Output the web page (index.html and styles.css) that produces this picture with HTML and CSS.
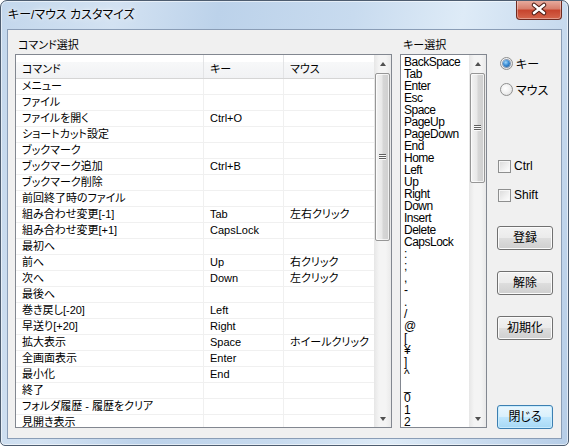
FILE: index.html
```html
<!DOCTYPE html>
<html lang="ja">
<head>
<meta charset="UTF-8">
<title>キー/マウス カスタマイズ</title>
<link rel="stylesheet" href="styles.css">
</head>
<body>

<div class="window">
  <div class="titlebar">
    <span class="title">キー/マウス カスタマイズ</span>
    <div class="close">
      <svg width="46" height="20" viewBox="0 0 46 20">
        <path d="M18 6 L28 14 M28 6 L18 14" stroke="#4a1a12" stroke-width="4.6" stroke-linecap="round"/>
        <path d="M18 6 L28 14 M28 6 L18 14" stroke="#fff" stroke-width="2.6" stroke-linecap="round"/>
      </svg>
    </div>
  </div>

  <div class="client">

    <div class="group cmd">
      <div class="label">コマンド選択</div>
      <div class="listview">
        <div class="lv-body">
          <div class="lv-head">
            <div>コマンド</div><div>キー</div><div>マウス</div>
          </div>
          <div class="lv-row"><div>メニュー</div><div></div><div></div></div>
          <div class="lv-row"><div>ファイル</div><div></div><div></div></div>
          <div class="lv-row"><div>ファイルを開く</div><div>Ctrl+O</div><div></div></div>
          <div class="lv-row"><div>ショートカット設定</div><div></div><div></div></div>
          <div class="lv-row"><div>ブックマーク</div><div></div><div></div></div>
          <div class="lv-row"><div>ブックマーク追加</div><div>Ctrl+B</div><div></div></div>
          <div class="lv-row"><div>ブックマーク削除</div><div></div><div></div></div>
          <div class="lv-row"><div>前回終了時のファイル</div><div></div><div></div></div>
          <div class="lv-row"><div>組み合わせ変更[-1]</div><div>Tab</div><div>左右クリック</div></div>
          <div class="lv-row"><div>組み合わせ変更[+1]</div><div>CapsLock</div><div></div></div>
          <div class="lv-row"><div>最初へ</div><div></div><div></div></div>
          <div class="lv-row"><div>前へ</div><div>Up</div><div>右クリック</div></div>
          <div class="lv-row"><div>次へ</div><div>Down</div><div>左クリック</div></div>
          <div class="lv-row"><div>最後へ</div><div></div><div></div></div>
          <div class="lv-row"><div>巻き戻し[-20]</div><div>Left</div><div></div></div>
          <div class="lv-row"><div>早送り[+20]</div><div>Right</div><div></div></div>
          <div class="lv-row"><div>拡大表示</div><div>Space</div><div>ホイールクリック</div></div>
          <div class="lv-row"><div>全画面表示</div><div>Enter</div><div></div></div>
          <div class="lv-row"><div>最小化</div><div>End</div><div></div></div>
          <div class="lv-row"><div>終了</div><div></div><div></div></div>
          <div class="lv-row"><div>フォルダ履歴 - 履歴をクリア</div><div></div><div></div></div>
          <div class="lv-row"><div>見開き表示</div><div></div><div></div></div>
        </div>
        <div class="scrollbar">
          <div class="sb-btn up"></div>
          <div class="sb-track"><div class="sb-thumb tall"><span class="grip"></span></div></div>
          <div class="sb-btn down"></div>
        </div>
      </div>
    </div>

    <div class="group keys">
      <div class="label">キー選択</div>
      <div class="listbox">
        <ul class="lb-items">
          <li>BackSpace</li><li>Tab</li><li>Enter</li><li>Esc</li><li>Space</li>
          <li>PageUp</li><li>PageDown</li><li>End</li><li>Home</li><li>Left</li>
          <li>Up</li><li>Right</li><li>Down</li><li>Insert</li><li>Delete</li>
          <li>CapsLock</li><li>:</li><li>;</li><li>,</li><li>-</li>
          <li>.</li><li>/</li><li>@</li><li>[</li><li>¥</li>
          <li>]</li><li>^</li><li>_</li><li>0</li><li>1</li><li>2</li>
        </ul>
        <div class="scrollbar">
          <div class="sb-btn up"></div>
          <div class="sb-track"><div class="sb-thumb short"><span class="grip"></span></div></div>
          <div class="sb-btn down"></div>
        </div>
      </div>
    </div>

    <div class="side">
      <div class="opt radio-row"><span class="radio checked"></span>キー</div>
      <div class="opt radio-row second"><span class="radio"></span>マウス</div>
      <div class="opt check-row ctrl"><span class="check"></span>Ctrl</div>
      <div class="opt check-row shift"><span class="check"></span>Shift</div>
      <div class="btn first">登録</div>
      <div class="btn">解除</div>
      <div class="btn">初期化</div>
      <div class="btn default">閉じる</div>
    </div>

  </div>
</div>

</body>
</html>
```

FILE: styles.css
```css
* {
  box-sizing: border-box;
}

body {
  margin: 0;
  background: #fff;
  font-family: "Liberation Sans", "Noto Sans CJK JP", sans-serif;
  font-size: 12px;
  font-feature-settings: "palt";
  color: #000;
}

.window {
  width: 569px;
  height: 446px;
  border: 1px solid #4e5d70;
  border-radius: 7px 7px 5px 5px;
  padding: 0 6px 6px;
  display: flex;
  flex-direction: column;
  overflow: hidden;
  background: linear-gradient(100deg, #c3d7ec 0%, #d3e2f2 18%, #bcd2ea 34%, #c8dbef 55%, #deebf7 72%, #b6cde7 100%);
  box-shadow: inset 0 0 0 1px rgba(255,255,255,0.55);
}

.titlebar {
  height: 28px;
  display: flex;
  justify-content: space-between;
  align-items: flex-start;
}

.title {
  padding-left: 1px;
  line-height: 28px;
  font-size: 12px;
  text-shadow: 0 0 6px rgba(255,255,255,0.95), 0 0 2px rgba(255,255,255,0.9);
}

.close {
  margin-top: -1px;
  width: 46px;
  height: 20px;
  border: 1px solid #6f2a20;
  border-top: none;
  border-radius: 0 0 4px 4px;
  background: linear-gradient(#e9b0a3 0%, #d8806e 45%, #c7452e 55%, #d4664c 100%);
  box-shadow: inset 0 0 0 1px rgba(255,255,255,0.35);
}

.close svg {
  display: block;
  margin: -1px 0 0 -1px;
}

.client {
  height: 410px;
  border: 1px solid #8a9db6;
  background: #f0f0f0;
  display: flex;
  padding: 7px 0 0 7px;
}

.label {
  height: 17px;
  line-height: 17px;
  padding-left: 3px;
  font-size: 11px;
}

.cmd {
  width: 377px;
}

.keys {
  width: 87px;
  margin-left: 8px;
}

/* list view */

.listview {
  height: 374px;
  border: 1px solid #828790;
  background: #fff;
  display: flex;
}

.lv-body {
  flex: 1;
  overflow: hidden;
  font-size: 11px;
}

.lv-head,
.lv-row {
  display: grid;
  grid-template-columns: 188px 80px 90px;
}

.lv-head {
  height: 24px;
  border-bottom: 1px solid #d5d5d5;
  background: linear-gradient(#fff 0%, #fff 30%, #f7f8f9 31%, #f1f2f4 100%);
}

.lv-head div {
  padding: 6px 6px 0;
  line-height: 16px;
  border-right: 1px solid #e3e4e6;
}

.lv-head div:last-child {
  border-right: none;
}

.lv-row {
  height: 16px;
  border-bottom: 1px solid #f0f0f0;
}

.lv-row div {
  padding-left: 6px;
  line-height: 15px;
  white-space: nowrap;
  border-right: 1px solid #f0f0f0;
}

.lv-row div:last-child {
  border-right: none;
}

/* list box */

.listbox {
  height: 374px;
  border: 1px solid #828790;
  background: #fff;
  display: flex;
}

.lb-items {
  flex: 1;
  margin: 0;
  padding: 1px 0 0 3px;
  list-style: none;
  overflow: hidden;
}

.lb-items li {
  height: 12px;
  line-height: 12px;
  font-size: 12px;
  letter-spacing: -0.5px;
  white-space: nowrap;
}

/* scrollbar */

.scrollbar {
  width: 17px;
  display: flex;
  flex-direction: column;
  background: linear-gradient(to right, #e6e6e6, #f4f4f4 30%, #f4f4f4 70%, #e9e9e9);
}

.sb-btn {
  height: 17px;
  display: flex;
  justify-content: center;
  align-items: center;
}

.sb-btn::after {
  content: "";
  border-left: 3.5px solid transparent;
  border-right: 3.5px solid transparent;
}

.sb-btn.up::after {
  border-bottom: 4px solid #505050;
}

.sb-btn.down::after {
  border-top: 4px solid #505050;
}

.sb-track {
  flex: 1;
  padding: 1px 1px 0;
}

.sb-thumb {
  border: 1px solid #969696;
  border-radius: 2px;
  background: linear-gradient(to right, #f3f3f3, #e8e8e8 45%, #d6d6d6 55%, #cfcfcf);
  box-shadow: inset 0 0 0 1px rgba(255,255,255,0.7);
  display: flex;
  justify-content: center;
  align-items: center;
}

.sb-thumb.tall {
  height: 168px;
}

.sb-thumb.short {
  height: 110px;
}

.grip {
  width: 7px;
  height: 6px;
  background: repeating-linear-gradient(#5f5f5f 0 1px, #fafafa 1px 2px);
}

/* right column */

.side {
  width: 56px;
  margin-left: 10px;
  padding-top: 18px;
  display: flex;
  flex-direction: column;
}

.opt {
  height: 16px;
  display: flex;
  align-items: center;
  font-size: 12px;
}

.radio-row {
  padding-left: 3px;
}

.radio-row.second {
  margin-top: 10px;
}

.radio {
  width: 13px;
  height: 13px;
  margin-right: 3px;
  border: 1px solid #8e8f8f;
  border-radius: 50%;
  background: radial-gradient(circle at 40% 40%, #fff 0%, #f0f0f0 50%, #d6d6d6 100%);
  display: flex;
  justify-content: center;
  align-items: center;
}

.radio.checked::after {
  content: "";
  width: 7px;
  height: 7px;
  border-radius: 50%;
  background: radial-gradient(circle at 40% 35%, #9fd6fb 0%, #3c8ed6 45%, #0f4c8e 100%);
  box-shadow: 0 0 0 1px rgba(30,70,120,0.5);
}

.check-row {
  padding-left: 1px;
}

.check-row.ctrl {
  margin-top: 61px;
}

.check-row.shift {
  margin-top: 13px;
}

.check {
  width: 13px;
  height: 13px;
  margin-right: 3px;
  border: 1px solid #8e8f8f;
  background: linear-gradient(135deg, #d9d9d9 0%, #f1f1f1 60%, #fff 100%);
  box-shadow: inset 0 0 0 1px #f6f6f6;
}

.btn {
  height: 24px;
  margin-top: 21px;
  border: 1px solid #707070;
  border-radius: 3px;
  background: linear-gradient(#f2f2f2 0%, #ebebeb 48%, #dddddd 52%, #cfcfcf 100%);
  box-shadow: inset 0 0 0 1px #fbfbfb;
  text-align: center;
  line-height: 22px;
  font-size: 12px;
}

.btn.first {
  margin-top: 23px;
}

.btn.default {
  margin-top: 65px;
  border-color: #3c7fb1;
  background: linear-gradient(#eaf6fd 0%, #d9f0fc 48%, #bee6fd 52%, #a7d9f5 100%);
  box-shadow: inset 0 0 0 1px #c8ecfe;
}
```
